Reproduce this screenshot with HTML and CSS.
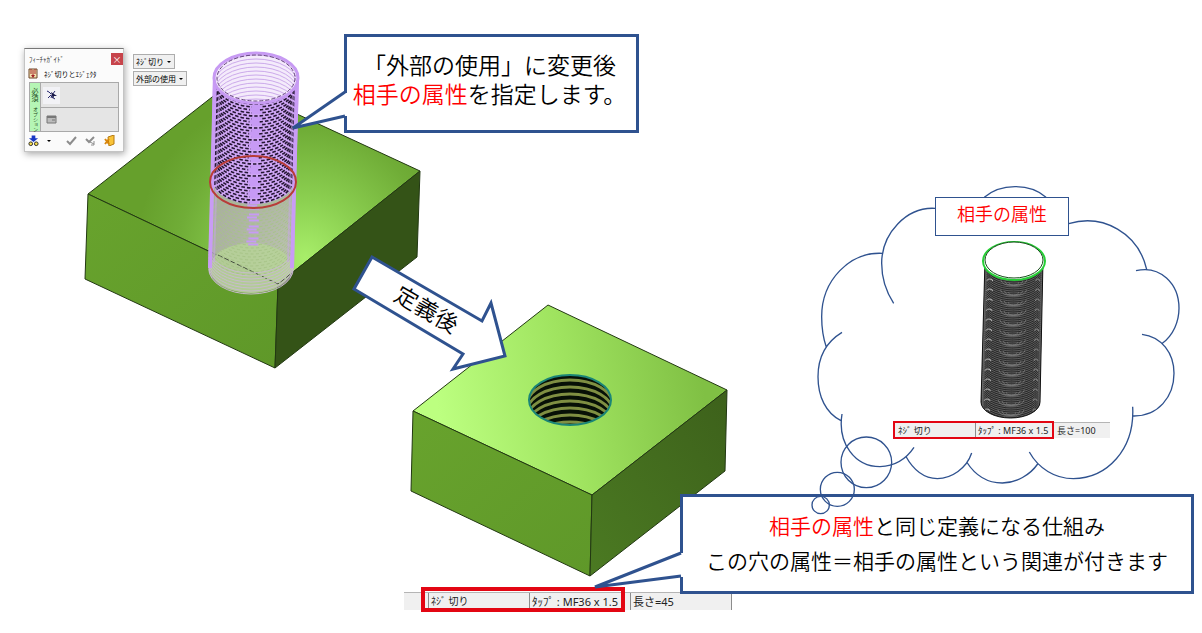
FILE: index.html
```
<!DOCTYPE html>
<html lang="ja">
<head>
<meta charset="utf-8">
<title>ネジ切り 相手の属性</title>
<link rel="stylesheet" href="styles.css">
</head>
<body>
<main class="canvas">
  <svg class="scene" width="1202" height="633" aria-hidden="true">
    <defs>
      <radialGradient id="topA" gradientUnits="userSpaceOnUse" cx="305" cy="258" r="170">
        <stop offset="0" stop-color="#a8ee6a"/><stop offset=".35" stop-color="#8bcf50"/><stop offset=".75" stop-color="#70ad37"/><stop offset="1" stop-color="#66a02c"/>
      </radialGradient>
      <linearGradient id="topB" gradientUnits="userSpaceOnUse" x1="440" y1="420" x2="700" y2="370">
        <stop offset="0" stop-color="#bcff80"/><stop offset=".5" stop-color="#9fe35f"/><stop offset="1" stop-color="#80c044"/>
      </linearGradient>
      <linearGradient id="sideB" x1="0" y1="1" x2="1" y2="0">
        <stop offset="0" stop-color="#4b7a22"/><stop offset="1" stop-color="#3d611b"/>
      </linearGradient>
      <linearGradient id="front" x1="0" y1="0" x2="1" y2="1">
        <stop offset="0" stop-color="#68a32d"/><stop offset="1" stop-color="#5f9829"/>
      </linearGradient>
      <clipPath id="holeClip"><ellipse cx="570" cy="400" rx="41" ry="25"/></clipPath>
      <clipPath id="mouthClip"><ellipse cx="256.500" cy="78" rx="40" ry="24"/></clipPath>
      <clipPath id="boltClip"><path d="M985 260L981 402A29.500 16 0 0 0 1040 402L1043 260A29 18 0 0 1 985 260Z"/></clipPath>
    </defs>

    <g stroke="#223812" stroke-width="1" stroke-linejoin="round">
      <path fill="url(#topA)" d="M88 194L230 83L420 171L278 284Z"/>
      <path fill="url(#front)" d="M88 194L278 284L275 368L85 279Z"/>
      <path fill="#345317" d="M278 284L420 171L417 257L275 368Z"/>
      <path fill="url(#topB)" d="M548 305L727 390L592 495L413 411Z"/>
      <path fill="url(#front)" d="M413 411L592 495L590 576L411 491Z"/>
      <path fill="url(#sideB)" d="M592 495L727 390L725 471L590 576Z"/>
    </g>

    <g clip-path="url(#holeClip)">
      <rect x="528" y="374" width="84" height="52" fill="#071006"/>
      <g id="holeThread" fill="none" stroke="#7f8f42" stroke-width="3"></g>
    </g>
    <ellipse cx="570" cy="400" rx="41" ry="25" fill="none" stroke="#1b8577" stroke-width="2"/>

    <path fill="#cfa6f5" d="M213 77L211 182A43 26 0 0 0 296 182L299 77Z"/>
    <path fill="#c9a9e0" fill-opacity=".6" d="M211 182L208 268A43 25 0 0 0 294 268L296 182A43 26 0 0 1 211 182Z"/>
    <ellipse cx="251" cy="268" rx="41" ry="25" fill="#b7d596" fill-opacity=".8"/>
    <path d="M218 255L278 284L293 272" fill="none" stroke="#46503f" stroke-dasharray="5 2"/>
    <g id="tapThread" fill="none"></g>
    <g id="tapBase" fill="none" stroke="#c8bccd" stroke-width="1"></g>
    <path d="M215 77L210 268M297 77L292 268" stroke="#c99cf5" stroke-width="4"/>
    <path d="M219 95L214 262M293 95L288 262" stroke="#c9a4ee" stroke-width="2" stroke-opacity=".5"/>
    <ellipse cx="256" cy="78" rx="42" ry="25" fill="#f4ebfb" stroke="#c79af3" stroke-width="3"/>
    <g id="mouthThread" clip-path="url(#mouthClip)" fill="none" stroke="#cba9ea" stroke-width="1"></g>
    <ellipse cx="256" cy="78" rx="39" ry="23" fill="none" stroke="#65467d" stroke-dasharray="4 2"/>
    <ellipse cx="253" cy="182" rx="43" ry="26" fill="none" stroke="#b83c38" stroke-width="2"/>

    <path fill="#262626" d="M985 260L981 402A29.500 16 0 0 0 1040 402L1043 260Z"/>
    <g id="boltThread" clip-path="url(#boltClip)" fill="none"></g>
    <path d="M985 260L981 402A29.500 16 0 0 0 1040 402L1043 260" fill="none" stroke="#111"/>
    <ellipse cx="1014" cy="261" rx="31" ry="19" fill="#fff" stroke="#25cf35" stroke-width="2"/>
    <ellipse cx="1014" cy="260" rx="29" ry="18" fill="#fff" stroke="#164d19" stroke-width="1"/>

    <path class="outline" fill="#fff" d="M372 257L482 321L491 303L505 356L453 369L463 354L354 289Z"/>
  </svg>

  <section class="guide">
    <header class="guide-head">
      <h1 class="guide-title">ﾌｨｰﾁｬｶﾞｲﾄﾞ</h1>
      <button class="close" type="button" aria-label="閉じる">×</button>
    </header>
    <div class="guide-name">
      <svg width="10" height="11" viewBox="0 0 10 11"><path d="M1 1H9V10H1Z" fill="#f3e3b0" stroke="#6c4528"/><path d="M3 1V6M7 1V6M5 2V8" stroke="#a32529" fill="none"/><path d="M3 7H7L5 10Z" fill="#a32529"/></svg>
      <span>ﾈｼﾞ切りとｴｼﾞｪｸﾀ</span>
    </div>
    <div class="guide-grid">
      <span class="tab">必須</span>
      <div class="slot">
        <button class="tool tool-on" type="button" aria-label="要素選択"><svg width="12" height="12" viewBox="0 0 12 12"><path d="M1 2L3 3L5 5M5 9L6 6L9 2M2 9L5 6M6 8L9 10" stroke="#26276f" fill="none"/><path d="M5 3L11 7L8 7L7 10Z" fill="#171747"/></svg></button>
      </div>
      <span class="tab tab-small">オプション</span>
      <div class="slot">
        <button class="tool" type="button" aria-label="一覧"><svg width="11" height="9" viewBox="0 0 11 9"><path d="M1 1H10V8H1Z" fill="#bbb" stroke="#777"/><path d="M1 2H10" stroke="#777" stroke-width="2"/><path d="M6 5H9" stroke="#777"/></svg></button>
      </div>
    </div>
    <footer class="guide-foot">
      <button class="tool" type="button" aria-label="表示"><svg width="11" height="12" viewBox="0 0 12 12"><path d="M4 0H8V3H11L6 7L1 3H4Z" fill="#1737c4"/><circle cx="3" cy="9" r="2" fill="#f7dd4a" stroke="#222"/><circle cx="9" cy="9" r="2" fill="#f7dd4a" stroke="#222"/></svg></button>
      <i class="caret"></i>
      <button class="tool push" type="button" aria-label="確定"><svg width="11" height="10" viewBox="0 0 11 10"><path d="M1 5L4 8L10 1" fill="none" stroke="#8d8d8d" stroke-width="2"/></svg></button>
      <button class="tool" type="button" aria-label="続行"><svg width="11" height="10" viewBox="0 0 11 10"><path d="M1 3L4 6L9 1" fill="none" stroke="#8d8d8d" stroke-width="2"/><path d="M5 6L9 8M9 5V9H6" fill="none" stroke="#8d8d8d"/></svg></button>
      <button class="tool" type="button" aria-label="終了"><svg width="11" height="11" viewBox="0 0 11 11"><path d="M4 2L10 0V9L5 11Z" fill="#f9c337" stroke="#b57910"/><path d="M1 4L5 9M5 4L1 9" stroke="#d8860b" stroke-width="2"/></svg></button>
    </footer>
  </section>

  <div class="combos">
    <label class="combo"><select aria-label="種類"><option>ﾈｼﾞ切り</option></select><i class="caret"></i></label>
    <label class="combo combo-wide"><select aria-label="属性の使用"><option>外部の使用</option></select><i class="caret"></i></label>
  </div>

  <div class="callout change">
    <svg class="tail" width="60" height="40" aria-hidden="true"><path fill="#fff" d="M60 3L56 3L4 38L56 26H60Z"/><path class="outline" d="M56 2L4 38L56 26"/></svg>
    <p>「外部の使用」に変更後<br><em>相手の属性</em>を指定します。</p>
  </div>

  <p class="arrow-text">定義後</p>

  <div class="status status-partner">
    <span class="name">ﾈｼﾞ 切り</span><span class="tap">ﾀｯﾌﾟ : MF36 x 1.5</span><span class="len">長さ=100</span>
  </div>
  <div class="status status-hole">
    <span class="name">ﾈｼﾞ 切り</span><span class="tap">ﾀｯﾌﾟ : MF36 x 1.5</span><span class="len">長さ=45</span>
  </div>

  <div class="callout relation">
    <svg class="tail" width="94" height="42" aria-hidden="true"><path fill="#fff" d="M94 4H90L4 38L90 28H94Z"/><path class="outline" d="M90 4L4 38L90 27"/></svg>
    <p><em>相手の属性</em>と同じ定義になる仕組み<br>この穴の属性＝相手の属性という関連が付きます</p>
  </div>

  <svg class="cloud" width="400" height="340" viewBox="0 0 1200 1020" aria-hidden="true">
    <path d="M553 52C600 10 690 8 738 52M405 85C320 80 245 160 245 250C245 300 258 335 281 370M247 220C150 215 65 300 65 410C65 440 70 475 79 502M126 457C80 485 54 530 54 590C54 650 78 700 123 722M126 702C112 790 165 860 240 860C285 858 320 835 342 802M317 828C340 870 370 895 412 896C455 895 500 865 515 819M500 846C525 885 560 909 607 909C650 908 690 885 713 852M688 816C715 865 765 896 820 896C920 895 1005 810 998 680M1026 463C1085 470 1122 520 1122 580C1122 650 1075 710 998 708M1008 272C1080 255 1137 310 1137 385C1137 425 1120 465 1087 490M806 131C910 100 1015 160 1040 268"/>
    <circle cx="199" cy="847" r="76"/><circle cx="112" cy="928" r="51"/><circle cx="62" cy="975" r="26"/>
  </svg>
  <p class="partner-label">相手の属性</p>
</main>
<script src="threads.js"></script>
</body>
</html>
```

FILE: styles.css
```
*, *::before, *::after { box-sizing: border-box; }

body {
  margin: 0;
  background: #fff;
  color: #000;
  font-family: "Noto Sans CJK JP", "Noto Sans", sans-serif;
}

p, h1 { margin: 0; font-weight: 350; }
em { color: #f00; font-style: normal; }
button { padding: 0; border: 0; background: none; font: inherit; }
svg { display: block; }

.canvas { position: relative; min-height: 100vh; overflow: hidden; }
.scene { position: absolute; left: 0; top: 0; }
.outline { stroke: #2f528f; stroke-width: 3; }
.tail .outline { fill: none; }

/* feature guide window */
.guide {
  position: absolute;
  left: 24px;
  top: 48px;
  width: 100px;
  padding: 4px 4px 2px;
  border: 1px solid #c4c4c4;
  border-top-color: #777;
  background: #fbfbfb;
  box-shadow: 1px 2px 7px rgba(0, 0, 0, .35);
  font-size: 7px;
  line-height: 12px;
}
.guide-head { display: flex; justify-content: space-between; margin-right: -4px; }
.guide-title { font-size: 7px; font-weight: 400; color: #333; }
.close { width: 12px; height: 12px; background: #c7444b; color: #fff; font-size: 9px; line-height: 11px; }
.guide-name { display: flex; align-items: center; gap: 6px; height: 17px; margin-left: -1px; }
.guide-grid {
  display: grid;
  grid-template-columns: 10px 1fr;
  grid-template-rows: 24px 24px;
  border: 1px solid #a9a9a9;
}
.tab {
  display: flex;
  align-items: center;
  justify-content: center;
  writing-mode: vertical-rl;
  background: #b5f5b5;
  color: #1d4b1d;
  font-size: 7px;
  line-height: 10px;
  white-space: nowrap;
}
.tab-small { font-size: 5px; }
.slot { display: flex; align-items: center; padding-left: 2px; background: #e5e5e5; border-left: 1px solid #a9a9a9; }
.slot:last-child { border-top: 1px solid #a9a9a9; }
.slot .tool { display: grid; place-items: center; width: 17px; height: 17px; }
.tool-on { background: #f2f2f6; }
.guide-foot { display: flex; align-items: center; gap: 8px; height: 17px; padding-right: 4px; margin-left: -1px; }
.push { margin-left: auto; }
.caret { border: 2px solid transparent; border-top-color: #000; border-bottom: 0; }

.combos { position: absolute; left: 133px; top: 54px; display: grid; justify-items: start; gap: 2px; }
.combo {
  display: flex;
  align-items: center;
  width: 42px;
  height: 15px;
  padding: 0 3px 0 2px;
  border: 1px solid #adadad;
  background: #f0f0f0;
}
.combo-wide { width: 54px; }
.combo select {
  flex: 1;
  min-width: 0;
  padding: 0;
  border: 0;
  appearance: none;
  background: none;
  color: #000;
  font: 8px/12px "Noto Sans CJK JP", sans-serif;
}

/* callouts */
.callout {
  position: absolute;
  display: flex;
  justify-content: center;
  border: 3px solid #2f528f;
  background: #fff;
  text-align: center;
  white-space: nowrap;
}
.tail { position: absolute; }
.change { left: 344px; top: 34px; width: 295px; height: 99px; padding: 13px 4px 0 0; font-size: 23px; line-height: 29px; }
.change .tail { left: -58px; top: 53px; }
.relation { left: 680px; top: 494px; width: 514px; height: 100px; padding-top: 11px; font-size: 21px; line-height: 35px; }
.relation .tail { left: -92px; top: 52px; }

.arrow-text {
  position: absolute;
  left: 393px;
  top: 292px;
  font-size: 23px;
  line-height: 32px;
  transform: rotate(30deg);
}

.partner-label {
  position: absolute;
  left: 935px;
  top: 197px;
  width: 134px;
  height: 39px;
  border: 1px solid #2f528f;
  background: #fff;
  color: #f00;
  font-size: 18px;
  line-height: 31px;
  text-align: center;
}

/* status bars, the red frame marks name and tap */
.status {
  position: absolute;
  display: grid;
  background: #f0f0f0;
  border-top: 1px solid #b5b5b5;
  color: #222;
  font-family: "Noto Sans", "Noto Sans CJK JP", sans-serif;
  white-space: nowrap;
}
.status span { padding-left: 2px; border-left: 1px solid #8c8c8c; }
.status::after { content: ""; position: absolute; border: 4px solid #e30613; }
.status-partner { left: 893px; top: 422px; width: 217px; grid-template-columns: 79px 80px 1fr; padding-left: 3px; font-size: 9px; line-height: 15px; }
.status-partner .name, .status-partner .len { border-left: 0; }
.status-partner::after { left: 0; top: -2px; width: 161px; height: 18px; border-width: 2px; }
.status-hole { left: 404px; top: 592px; width: 328px; grid-template-columns: 101px 101px 1fr; padding-left: 24px; border-right: 1px solid #8c8c8c; font-size: 11px; line-height: 17px; }
.status-hole .name { font-size: 10px; }
.status-hole::after { left: 17px; top: -6px; width: 204px; height: 25px; }

.cloud { position: absolute; left: 800px; top: 180px; fill: none; stroke: #2f528f; stroke-width: 4; }
```

FILE: threads.js
```
const NS = 'http://www.w3.org/2000/svg';

// Adds half an ellipse; sweep 0 is the near (lower) half, 1 the far (upper) half.
function arc(group, cx, cy, rx, ry, sweep, attrs) {
  const path = document.createElementNS(NS, 'path');
  path.setAttribute('d', `M${cx - rx} ${cy}A${rx} ${ry} 0 0 ${sweep} ${cx + rx} ${cy}`);
  for (const key in attrs) path.setAttribute(key, attrs[key]);
  group.appendChild(path);
}
const byId = id => document.getElementById(id);

for (let y = 405; y < 455; y += 7) {
  arc(byId('holeThread'), 570, y, 43, 25, 1, {});
}

for (let i = 0; i < 58; i++) {
  const y = 80 + i * 3;
  const cx = 256 - (y - 77) / 38;
  const above = y < 181;
  arc(byId('tapThread'), cx, y, 40, 24, 0, above
    ? { stroke: '#241532', 'stroke-width': 1.6, 'stroke-dasharray': '3.5 2', 'stroke-dashoffset': i % 2 * 2.75 }
    : { stroke: '#a7c487', 'stroke-width': 1, 'stroke-dasharray': '3 2.5', 'stroke-dashoffset': i % 2 * 2.75 });
  if (y < 226) {
    const mid = document.createElementNS(NS, 'path');
    mid.setAttribute('d', `M${cx - 6 + i % 2 * 2} ${y + 23.5}h10`);
    mid.setAttribute('stroke', '#c79af5');
    mid.setAttribute('stroke-width', above ? 3 : 2);
    if (i % 4) byId('tapThread').appendChild(mid);
  }
}
for (let y = 248; y < 270; y += 3) arc(byId('tapBase'), 251, y, 42, 25, 0, {});
for (let y = 80; y < 126; y += 4) arc(byId('mouthThread'), 256, y, 42, 25, 1, {});

for (let i = 0; i < 82; i++) {
  const y = 250 + i * 2;
  const cx = 1014 - (y - 260) / 45;
  arc(byId('boltThread'), cx, y, 29, 17, 0, { stroke: '#777', 'stroke-width': 0.7 });
  if (i % 5 === 0) {
    for (const rx of [5, 9, 13]) {
      arc(byId('boltThread'), cx, y + 14 - rx / 3, rx, rx / 2, 0, { stroke: '#999', 'stroke-width': 0.5 });
    }
    arc(byId('boltThread'), cx - 24, y + 11, 3, 2, 1, { stroke: '#bbb', 'stroke-width': 1 });
    arc(byId('boltThread'), cx + 24, y + 11, 2, 2, 1, { stroke: '#888', 'stroke-width': 1 });
  }
}
```
